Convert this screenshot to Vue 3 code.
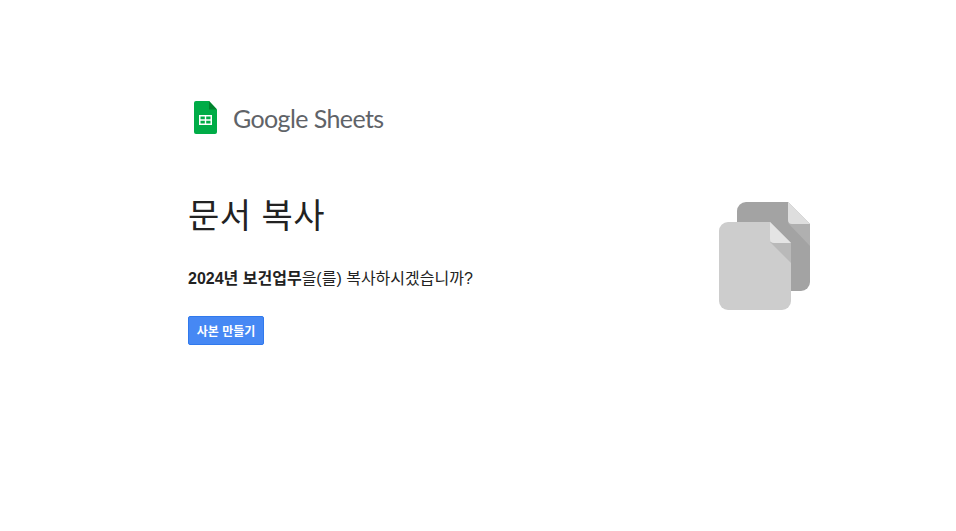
<script setup>
const title = '문서 복사'
</script>

<template>
  <main class="page">
    <header class="brand">
      <svg class="sheet-icon" width="23" height="33" viewBox="0 0 23 33">
        <path d="M2 0H15L23 8.500V31a2 2 0 0 1-2 2H2a2 2 0 0 1-2-2V2a2 2 0 0 1 2-2Z" fill="#00ac47" />
        <path d="M15 0L23 8.500H15Z" fill="#00832d" />
        <path d="M5 14H18V24H5Z" fill="#fff" />
        <path d="M6.500 15.500H10.800V18.300H6.500ZM12.200 15.500H16.500V18.300H12.200ZM6.500 19.700H10.800V22.500H6.500ZM12.200 19.700H16.500V22.500H12.200Z" fill="#00ac47" />
      </svg>
      <span class="wordmark">Google Sheets</span>
    </header>
    <section class="content">
      <div class="copy">
        <h1>{{ title }}</h1>
        <p><b>2024년 보건업무</b>을(를) 복사하시겠습니까?</p>
        <button type="button">사본 만들기</button>
      </div>
      <svg class="docs" width="92" height="109" viewBox="0 0 92 109">
        <path d="M28 1H70L92 23V81a9 9 0 0 1-9 9H28a9 9 0 0 1-9-9V10a9 9 0 0 1 9-9Z" fill="#a3a3a3" />
        <path d="M70 22L92 23V45Z" fill="#b0b0b0" />
        <path d="M70 1L92 23H74a4 4 0 0 1-4-4Z" fill="#dedede" />
        <path d="M10 21H52L73 42V100a9 9 0 0 1-9 9H10a9 9 0 0 1-9-9V30a9 9 0 0 1 9-9Z" fill="#cdcdcd" />
        <path d="M52 41L73 42V62Z" fill="#b9b9b9" />
        <path d="M52 21L73 42H56a4 4 0 0 1-4-4Z" fill="#e4e4e4" />
      </svg>
    </section>
  </main>
</template>

<style>
html, body { background: #fff; }
</style>

<style scoped>
.page {
  box-sizing: border-box;
  width: 956px;
  height: 531px;
  padding: 101px 146px 0 188px;
  font-family: "Liberation Sans", "Noto Sans CJK KR", sans-serif;
  color: #202124;
}
.brand {
  display: flex;
  align-items: center;
  height: 33px;
  padding-left: 6px;
}
.wordmark {
  margin-left: 16px;
  font-family: "Lato", sans-serif;
  font-size: 25px;
  letter-spacing: -0.6px;
  color: #5f6368;
}
.content {
  display: flex;
  justify-content: space-between;
  align-items: flex-start;
  margin-top: 60px;
}
h1 {
  margin: 0;
  font-size: 34px;
  line-height: 44px;
  font-weight: 400;
  letter-spacing: 0.5px;
  color: #222;
}
p {
  margin: 31px 0 0;
  font-size: 16px;
  line-height: 20px;
  color: #222;
}
button {
  display: block;
  margin-top: 27px;
  width: 76px;
  height: 29px;
  padding: 0;
  border: 1px solid #3079ed;
  border-radius: 2px;
  background: #4688f4;
  color: #fff;
  font: 700 12px "Liberation Sans", "Noto Sans CJK KR", sans-serif;
}
.docs {
  margin-top: 7px;
}
</style>
